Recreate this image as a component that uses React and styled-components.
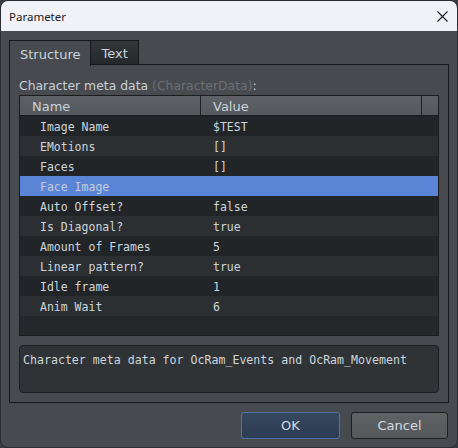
import React from 'react'
import styled, { createGlobalStyle } from 'styled-components'

const rows = [
  { name: 'Image Name', value: '$TEST' },
  { name: 'EMotions', value: '[]' },
  { name: 'Faces', value: '[]' },
  { name: 'Face Image', value: '', selected: true },
  { name: 'Auto Offset?', value: 'false' },
  { name: 'Is Diagonal?', value: 'true' },
  { name: 'Amount of Frames', value: '5' },
  { name: 'Linear pattern?', value: 'true' },
  { name: 'Idle frame', value: '1' },
  { name: 'Anim Wait', value: '6' },
]

function App() {
  return (
    <>
      <GlobalStyle />
      <Window>
        <TitleBar>
          <Title>Parameter</Title>
          <CloseButton>
            <svg width="11" height="11" viewBox="0 0 11 11">
              <path d="M0.5 0.5 L10.5 10.5 M10.5 0.5 L0.5 10.5" stroke="#1b1b1b" strokeWidth="1.1" />
            </svg>
          </CloseButton>
        </TitleBar>

        <Body>
          <Tabs>
            <Tab active>Structure</Tab>
            <Tab>Text</Tab>
          </Tabs>

          <Panel>
            <Label>
              Character meta data <Dim>(CharacterData)</Dim>:
            </Label>

            <Table>
              <HeaderRow>
                <HeadCell>Name</HeadCell>
                <HeadCell>Value</HeadCell>
                <HeadCell />
              </HeaderRow>
              <Rows>
                {rows.map((r, i) => (
                  <Row key={r.name} odd={i % 2 === 1} selected={r.selected}>
                    <NameCell>{r.name}</NameCell>
                    <ValueCell>{r.value}</ValueCell>
                  </Row>
                ))}
              </Rows>
            </Table>

            <Description>Character meta data for OcRam_Events and OcRam_Movement</Description>
          </Panel>

          <Buttons>
            <Button primary>OK</Button>
            <Button>Cancel</Button>
          </Buttons>
        </Body>
      </Window>
    </>
  )
}

const GlobalStyle = createGlobalStyle`
  html, body {
    margin: 0;
    padding: 0;
    background: #3a3c3f;
  }
  * { box-sizing: border-box; }
`

const Window = styled.div`
  width: 458px;
  height: 448px;
  display: flex;
  flex-direction: column;
  border: 1px solid #2b2d30;
  border-radius: 8px;
  overflow: hidden;
  background: #474a4e;
`

const TitleBar = styled.div`
  height: 30px;
  flex: none;
  display: flex;
  align-items: center;
  justify-content: space-between;
  padding: 0 9px 0 8px;
  background: #f1f2f7;
`

const Title = styled.span`
  font-family: "Noto Sans", "Open Sans", sans-serif;
  font-size: 11.5px;
  color: #1a1a1a;
  padding-top: 1px;
`

const CloseButton = styled.div`
  width: 11px;
  height: 11px;
  display: flex;
  margin-top: 1px;
`

const Body = styled.div`
  flex: 1;
  display: flex;
  flex-direction: column;
  padding: 9px 8px 0;
`

const Tabs = styled.div`
  display: flex;
  height: 25px;
  margin-bottom: -1px;
  position: relative;
  z-index: 1;
`

const Tab = styled.div`
  height: ${p => (p.active ? '26px' : '25px')};
  padding: 1px 10px 0;
  display: flex;
  align-items: center;
  font-family: "DejaVu Sans", sans-serif;
  font-size: 13px;
  color: #c9d3dc;
  border: 1px solid #16181a;
  border-bottom: ${p => (p.active ? 'none' : '1px solid #16181a')};
  background: ${p => (p.active ? '#474a4e' : 'linear-gradient(#34373a, #26292c)')};
  & + & {
    border-left: none;
  }
`

const Panel = styled.div`
  height: 339px;
  flex: none;
  display: flex;
  flex-direction: column;
  border: 1px solid #16181a;
  padding: 12px 9px 9px;
`

const Label = styled.div`
  height: 16px;
  line-height: 17px;
  margin-bottom: 2px;
  font-family: "DejaVu Sans", sans-serif;
  font-size: 12.4px;
  color: #c8d0d8;
  white-space: nowrap;
`

const Dim = styled.span`
  color: #6b6f74;
`

const Table = styled.div`
  height: 241px;
  flex: none;
  display: flex;
  flex-direction: column;
  border: 1px solid #1a1c1e;
  background: #25282b;
`

const HeaderRow = styled.div`
  height: 20px;
  flex: none;
  display: grid;
  grid-template-columns: 181px 221px 1fr;
  border-bottom: 1px solid #1a1c1e;
  background: linear-gradient(#5d6165, #55595d);
`

const HeadCell = styled.div`
  padding: 2px 0 0 12px;
  line-height: 17px;
  font-family: "DejaVu Sans", sans-serif;
  font-size: 13px;
  color: #c9d2db;
  border-right: 1px solid #1d1f21;
  &:last-child {
    border-right: none;
  }
`

const Rows = styled.div`
  display: flex;
  flex-direction: column;
`

const Row = styled.div`
  height: 20px;
  padding-top: 2px;
  display: grid;
  grid-template-columns: 181px 1fr;
  align-items: center;
  font-family: "DejaVu Sans Mono", monospace;
  font-size: 11.5px;
  color: ${p => (p.selected ? '#c3cbd9' : '#cdd5dd')};
  background: ${p => (p.selected ? '#5a85d6' : p.odd ? '#2c2f32' : '#222528')};
`

const NameCell = styled.div`
  padding-left: 20px;
  white-space: nowrap;
`

const ValueCell = styled.div`
  padding-left: 12px;
  white-space: nowrap;
`

const Description = styled.div`
  margin-top: 9px;
  height: 48px;
  flex: none;
  padding: 6px 3px;
  line-height: 16px;
  border: 1px solid #1c1e20;
  border-radius: 4px;
  background: #303336;
  font-family: "DejaVu Sans Mono", monospace;
  font-size: 11.6px;
  color: #cdd5dd;
  white-space: nowrap;
`

const Buttons = styled.div`
  display: flex;
  justify-content: flex-end;
  gap: 11px;
  margin-top: 9px;
  padding-right: 1px;
`

const Button = styled.div`
  width: ${p => (p.primary ? '99px' : '97px')};
  height: 27px;
  display: flex;
  align-items: center;
  justify-content: center;
  border-radius: 3px;
  font-family: "DejaVu Sans", sans-serif;
  font-size: 13px;
  color: #d3dae2;
  border: 1px solid ${p => (p.primary ? '#4f74a3' : '#1e2022')};
  background: ${p => (p.primary ? 'linear-gradient(#35485f, #2c3c51)' : 'linear-gradient(#5e6265, #56595c)')};
`

export default App
